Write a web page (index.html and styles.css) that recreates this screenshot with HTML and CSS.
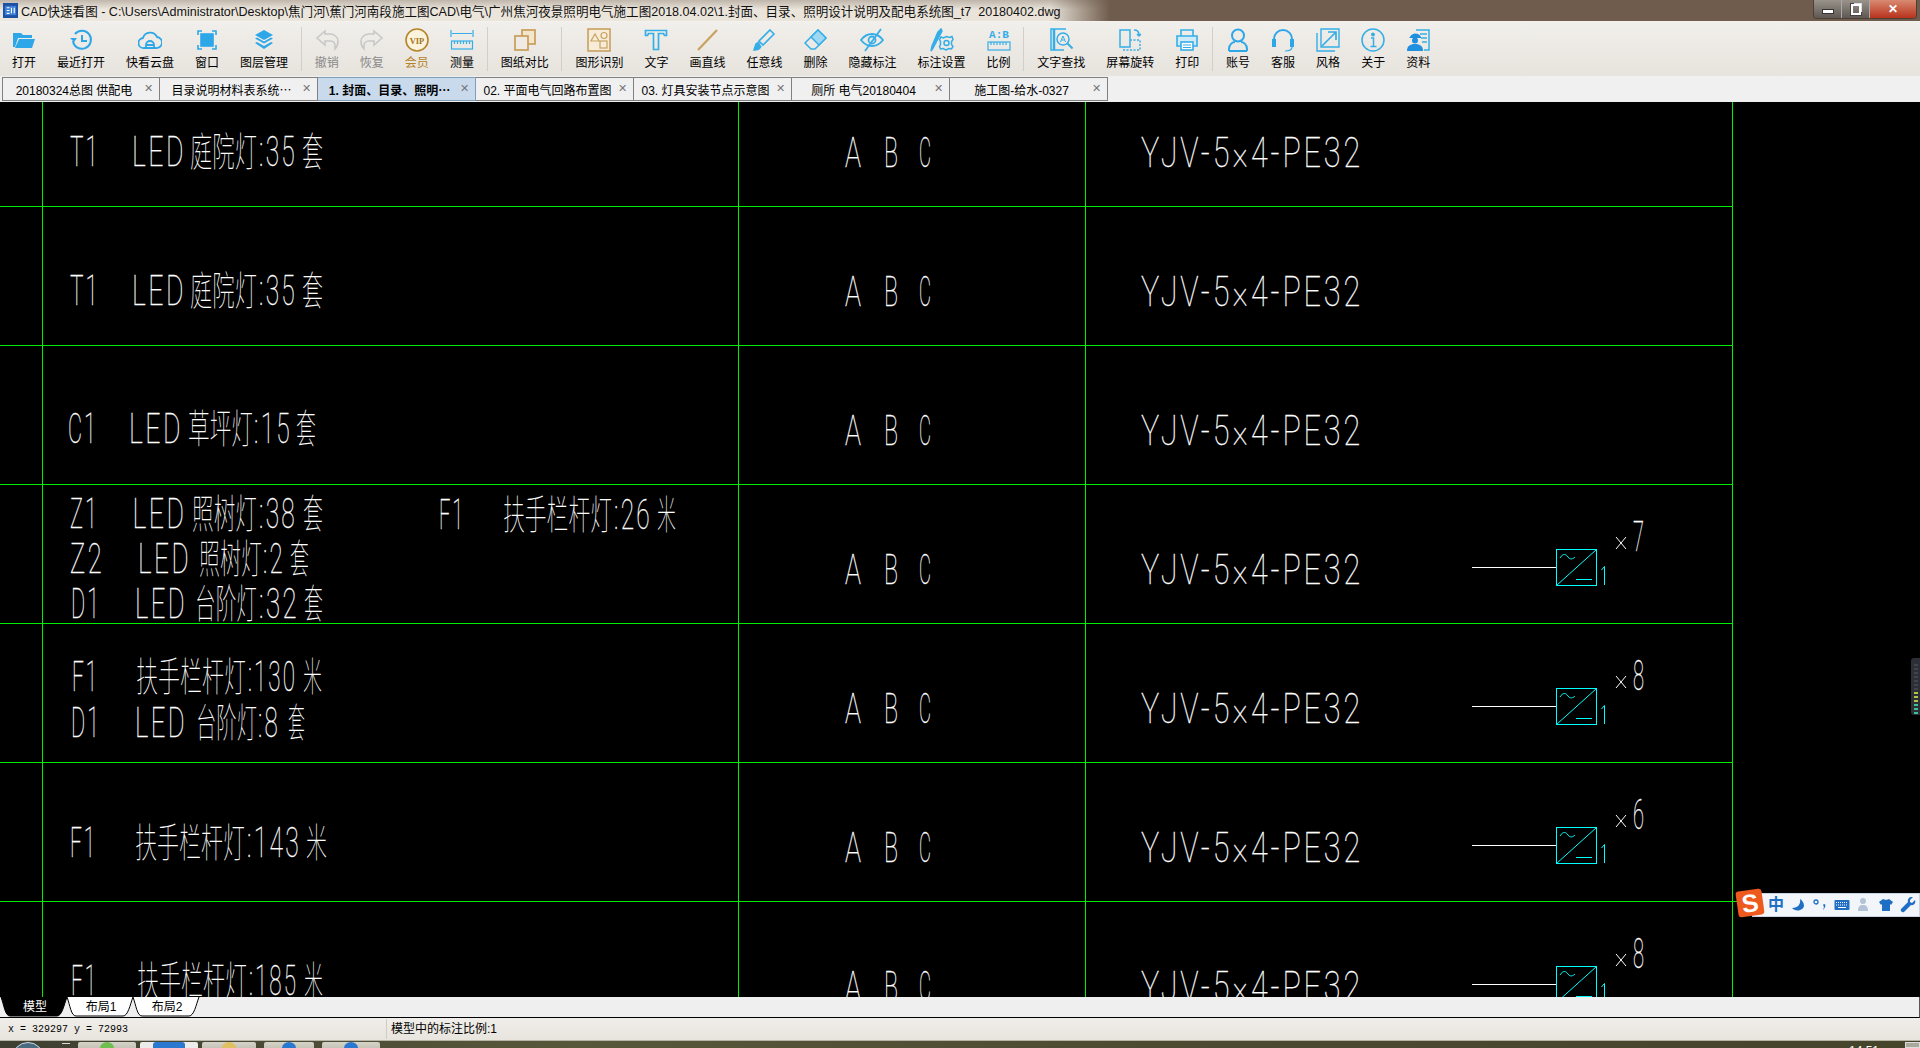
FILE: index.html
```html
<!DOCTYPE html>
<html lang="zh-CN">
<head>
    <meta charset="UTF-8">
    <title>CAD快速看图</title>
    <link rel="stylesheet" href="styles.css">
</head>
<body>
    <div class="titlebar">
        <svg class="app-icon" viewBox="0 0 16 16"><rect width="16" height="16" fill="#1d4fa3"/><rect x="2" y="3" width="12" height="10" fill="#3c7fd6"/><path d="M4 5h3M4 8h3M4 11h3M9 5v6M12 5v6" stroke="#fff" stroke-width="1.2"/></svg>
        <span class="title-text">CAD快速看图 - C:\Users\Administrator\Desktop\焦门河\蕉门河南段施工图CAD\电气\广州焦河夜景照明电气施工图2018.04.02\1.封面、目录、照明设计说明及配电系统图_t7&nbsp; 20180402.dwg</span>
        <div class="win-buttons">
            <div class="win-btn min"><i></i></div>
            <div class="win-btn restore"><i></i></div>
            <div class="win-btn close">✕</div>
        </div>
    </div>

    <div class="toolbar">
        <div class="tool">
            <svg viewBox="0 0 24 24" fill="#2ea7e8"><path d="M1 5h8l2 2h9v3H6L3 19H1z"/><path d="M7 11h16l-3 9H3z"/></svg>
            <span>打开</span>
        </div>
        <div class="tool">
            <svg viewBox="0 0 24 24" fill="none" stroke="#2ea7e8" stroke-width="2"><path d="M6 6a9 9 0 1 1-2 7"/><path d="M13 7v6h5"/><path d="M1 10h7L5 14z" fill="#2ea7e8" stroke="none"/></svg>
            <span>最近打开</span>
        </div>
        <div class="tool">
            <svg viewBox="0 0 24 24" fill="none" stroke="#2ea7e8" stroke-width="1.8"><path d="M6 20a5 5 0 0 1-1-10 7.5 7.5 0 0 1 14-1 5.5 5.5 0 0 1-1 11z"/><path d="M8 20v-3a4 4 0 0 1 8 0v3M8 17h8"/></svg>
            <span>快看云盘</span>
        </div>
        <div class="tool">
            <svg viewBox="0 0 24 24" fill="none" stroke="#2ea7e8" stroke-width="1.6"><path d="M3 7V3h4M17 3h4v4M21 17v4h-4M7 21H3v-4"/><rect x="6" y="6" width="12" height="12" fill="#2ea7e8"/></svg>
            <span>窗口</span>
        </div>
        <div class="tool">
            <svg viewBox="0 0 24 24" fill="#2ea7e8"><path d="M12 2l9 5-9 5-9-5z"/><path d="M3 10.500l2-1 7 4 7-4 2 1-9 5z"/><path d="M3 15l2-1 7 4 7-4 2 1-9 6z"/></svg>
            <span>图层管理</span>
        </div>
        <div class="tool-sep"></div>
        <div class="tool off">
            <svg viewBox="0 0 24 24" fill="none" stroke="#c8c8c8" stroke-width="1.6"><path d="M10 3L2 10l8 7v-4h5c3 0 5 2 5 5v3c2-2 3-5 3-8 0-4-4-7-8-7h-5z"/></svg>
            <span>撤销</span>
        </div>
        <div class="tool off">
            <svg viewBox="0 0 24 24" fill="none" stroke="#c8c8c8" stroke-width="1.6"><path d="M14 3l8 7-8 7v-4H9c-3 0-5 2-5 5v3c-2-2-3-5-3-8 0-4 4-7 8-7h5z"/></svg>
            <span>恢复</span>
        </div>
        <div class="tool vip">
            <svg viewBox="0 0 24 24"><circle cx="12" cy="12" r="11" fill="#fbf3dc" stroke="#b5832a" stroke-width="1.6"/><text x="12" y="15.500" class="vip-mark">VIP</text></svg>
            <span>会员</span>
        </div>
        <div class="tool">
            <svg viewBox="0 0 24 24" fill="none" stroke="#35aee8" stroke-width="1.2"><path d="M1 2v7M23 2v7M2 5.500h20"/><rect x="1.500" y="13" width="21" height="8"/><path d="M4.500 13v3M7.500 13v3M10.500 13v3M13.500 13v3M16.500 13v3M19.500 13v3"/></svg>
            <span>测量</span>
        </div>
        <div class="tool-sep"></div>
        <div class="tool">
            <svg viewBox="0 0 24 24" fill="none" stroke="#c9a260" stroke-width="1.8"><rect x="9" y="2" width="13" height="14" fill="#f3e6cc"/><rect x="2" y="8" width="13" height="14" fill="#efeae3"/></svg>
            <span>图纸对比</span>
        </div>
        <div class="tool-sep"></div>
        <div class="tool">
            <svg viewBox="0 0 24 24" fill="none" stroke="#c9a260" stroke-width="1.2"><rect x="1" y="1" width="22" height="22" fill="#f6ecd8" stroke-width="1.6"/><path d="M8 6l4 7H4z"/><circle cx="17" cy="7.500" r="3"/><rect x="13" y="13" width="7" height="7"/></svg>
            <span>图形识别</span>
        </div>
        <div class="tool">
            <svg viewBox="0 0 24 24" fill="none" stroke="#35aee8" stroke-width="1.7"><path d="M1.500 2.500h21v5h-2l-1-2h-5v16h-5v-16h-5l-1 2h-2z"/></svg>
            <span>文字</span>
        </div>
        <div class="tool">
            <svg viewBox="0 0 24 24" fill="none" stroke="#c9a260" stroke-width="2.2"><path d="M3 22L22 2"/></svg>
            <span>画直线</span>
        </div>
        <div class="tool">
            <svg viewBox="0 0 24 24" fill="none" stroke="#35aee8" stroke-width="1.6"><path d="M18 2l4 4-11 11-4-4z"/><path d="M7 14l-3 2-2 6c3 0 6-1 7-4" fill="#35aee8"/></svg>
            <span>任意线</span>
        </div>
        <div class="tool">
            <svg viewBox="0 0 24 24" fill="none" stroke="#35aee8" stroke-width="1.5"><path d="M15 2l8 8-11 11H8l-6-6z"/><path d="M15 2l8 8-7 7-8-8z" fill="#9fd8f3"/></svg>
            <span>删除</span>
        </div>
        <div class="tool">
            <svg viewBox="0 0 24 24" fill="none" stroke="#35aee8" stroke-width="1.8"><path d="M1 12c6-8 16-8 22 0-6 8-16 8-22 0z"/><circle cx="12" cy="12" r="3.500"/><path d="M5 23L21 1"/></svg>
            <span>隐藏标注</span>
        </div>
        <div class="tool">
            <svg viewBox="0 0 24 24" fill="none" stroke="#35aee8" stroke-width="1.5"><path d="M8 4l3-3 1 2-9 17-2 3 1-5z" fill="#35aee8"/><circle cx="16.500" cy="15" r="2.500"/><path d="M16.500 8.500l3 1 2.500-1 1 3-1.500 2v3l1.500 2-1.500 2.500-2.500-.5-3 1.500-3-1.500-2.500.5-1-2.500 1-2v-3l-1-2 1.500-2.500 2.500 1z"/></svg>
            <span>标注设置</span>
        </div>
        <div class="tool">
            <svg viewBox="0 0 24 24"><text x="12" y="10" class="ratio-mark">A:B</text><g fill="none" stroke="#35aee8" stroke-width="1.200"><rect x="1" y="14" width="22" height="8"/><path d="M4 14v3M7 14v3M10 14v3M13 14v3M16 14v3M19 14v3"/></g></svg>
            <span>比例</span>
        </div>
        <div class="tool-sep"></div>
        <div class="tool">
            <svg viewBox="0 0 24 24" fill="none" stroke="#35aee8" stroke-width="1.500"><path d="M17 1H2v21h13"/><path d="M5 1v21" stroke-width="2.500"/><circle cx="14" cy="11" r="6"/><path d="M18.500 15.500l5 5" stroke-width="2"/><path d="M11.500 14l2.500-6 2.500 6M12.500 12h3" stroke-width="1"/></svg>
            <span>文字查找</span>
        </div>
        <div class="tool">
            <svg viewBox="0 0 24 24" fill="none" stroke="#35aee8" stroke-width="1.500"><rect x="2" y="2" width="10" height="17"/><path d="M12 12h10v10H6v-3" stroke-dasharray="2 1.500"/><path d="M16 2c3 0 5 2 5 5M19 6l2 2 2-2"/></svg>
            <span>屏幕旋转</span>
        </div>
        <div class="tool">
            <svg viewBox="0 0 24 24" fill="none" stroke="#35aee8" stroke-width="1.600"><path d="M6 8V2h12v6"/><path d="M6 18H2V8h20v10h-4" fill="#cfeaf8"/><rect x="6" y="14" width="12" height="8" fill="#fff"/><path d="M8 17h8M8 19.500h8" stroke-width="1"/></svg>
            <span>打印</span>
        </div>
        <div class="tool-sep"></div>
        <div class="tool">
            <svg viewBox="0 0 24 24" fill="none" stroke="#2ea7e8" stroke-width="2"><circle cx="12" cy="7.500" r="6"/><path d="M3 23v-2c0-5 4-7 6-7M21 23v-2c0-5-4-7-6-7M3 23h18"/></svg>
            <span>账号</span>
        </div>
        <div class="tool">
            <svg viewBox="0 0 24 24" fill="none" stroke="#2ea7e8" stroke-width="2"><path d="M3 14v-3a9 9 0 0 1 18 0v3"/><path d="M1 11h4v8H1zM19 11h4v8h-4z" fill="#2ea7e8" stroke="none"/><path d="M21 19c0 3-3 4-7 4" stroke-width="1.200"/></svg>
            <span>客服</span>
        </div>
        <div class="tool">
            <svg viewBox="0 0 24 24" fill="none" stroke="#35aee8" stroke-width="1.700"><path d="M1 5v18h18M5 1h18v18H5z" stroke-width="1.400"/><path d="M6 18L20 4M12 4h8v8"/></svg>
            <span>风格</span>
        </div>
        <div class="tool">
            <svg viewBox="0 0 24 24" fill="none" stroke="#35aee8" stroke-width="1.500"><circle cx="12" cy="12" r="11"/><path d="M10 10h2.500v8M9.500 18.500h6" stroke-width="1.500"/><circle cx="12" cy="6.500" r="1.200" fill="#35aee8"/></svg>
            <span>关于</span>
        </div>
        <div class="tool">
            <svg viewBox="0 0 24 24"><g fill="none" stroke="#35aee8" stroke-width="1.500"><path d="M10 2h13v20h-5M14 6h7M15 10h6M16 14h5"/></g><path d="M4 9a6 6 0 0 1 11 0v1H3z" fill="#1f8fe0"/><circle cx="9" cy="12.500" r="3" fill="#1f8fe0"/><path d="M1 23c0-5 3-7 8-7s8 2 8 7z" fill="#1f8fe0"/></svg>
            <span>资料</span>
        </div>
    </div>

    <div class="doc-tabs">
        <div class="doc-tab"><span class="doc-name">20180324总图 供配电</span><b>✕</b></div>
        <div class="doc-tab"><span class="doc-name">目录说明材料表系统⋯</span><b>✕</b></div>
        <div class="doc-tab active"><span class="doc-name">1. 封面、目录、照明⋯</span><b>✕</b></div>
        <div class="doc-tab"><span class="doc-name">02. 平面电气回路布置图</span><b>✕</b></div>
        <div class="doc-tab"><span class="doc-name">03. 灯具安装节点示意图</span><b>✕</b></div>
        <div class="doc-tab"><span class="doc-name">厕所 电气20180404</span><b>✕</b></div>
        <div class="doc-tab"><span class="doc-name">施工图-给水-0327</span><b>✕</b></div>
    </div>

    <div class="canvas">
        <svg class="drawing" viewBox="0 102 1920 895" width="1920" height="895">
            <defs>
                <g id="driver">
                    <path class="wire" d="M1472 567.500H1556"/>
                    <rect class="cyan" x="1556.500" y="549.500" width="40" height="36"/>
                    <path class="cyan" d="M1556.500 585.500L1596.500 549.500M1576 579.500H1592M1560 558c3-5 6-4 8-1s5 2 7 0"/>
                    <path class="cyan" d="M1601.500 570L1604.500 566.500V585"/>
                </g>
                <path id="times" class="wire thin" d="M1616 537L1626 549M1626 537L1616 549"/>
            </defs>

            <path class="grid" d="M42.500 102V997M738.500 102V997M1085.500 102V997M1732.500 102V997"/>
            <path class="grid" d="M0 206.500H1733M0 345.500H1733M0 484.500H1733M0 623.500H1733M0 762.500H1733M0 901.500H1920"/>

            <!-- phase and cable columns, one row each -->
            <g id="cable-row">
                <text class="cad one" x="845" y="167" textLength="16" lengthAdjust="spacingAndGlyphs">A</text>
                <text class="cad one" x="884" y="167" textLength="14" lengthAdjust="spacingAndGlyphs">B</text>
                <text class="cad one" x="919" y="167" textLength="12" lengthAdjust="spacingAndGlyphs">C</text>
                <text class="cad" x="1141" y="167" textLength="222" lengthAdjust="spacingAndGlyphs">YJV-5×4-PE32</text>
            </g>
            <use href="#cable-row" y="139"/>
            <use href="#cable-row" y="278"/>
            <use href="#cable-row" y="417"/>
            <use href="#cable-row" y="556"/>
            <use href="#cable-row" y="695"/>
            <use href="#cable-row" y="834"/>

            <text class="cad" x="70" y="166" textLength="30" lengthAdjust="spacingAndGlyphs">T1</text>
            <text class="cad" x="132" y="166" textLength="54" lengthAdjust="spacingAndGlyphs">LED</text>
            <text class="han" x="190" y="166" textLength="67" lengthAdjust="spacingAndGlyphs">庭院灯</text>
            <text class="cad" x="259" y="166" textLength="38" lengthAdjust="spacingAndGlyphs">:35</text>
            <text class="han" x="302" y="166" textLength="21" lengthAdjust="spacingAndGlyphs">套</text>

            <text class="cad" x="70" y="305" textLength="30" lengthAdjust="spacingAndGlyphs">T1</text>
            <text class="cad" x="132" y="305" textLength="54" lengthAdjust="spacingAndGlyphs">LED</text>
            <text class="han" x="190" y="305" textLength="67" lengthAdjust="spacingAndGlyphs">庭院灯</text>
            <text class="cad" x="259" y="305" textLength="38" lengthAdjust="spacingAndGlyphs">:35</text>
            <text class="han" x="302" y="305" textLength="21" lengthAdjust="spacingAndGlyphs">套</text>

            <text class="cad" x="68" y="443" textLength="30" lengthAdjust="spacingAndGlyphs">C1</text>
            <text class="cad" x="129" y="443" textLength="54" lengthAdjust="spacingAndGlyphs">LED</text>
            <text class="han" x="188" y="443" textLength="65" lengthAdjust="spacingAndGlyphs">草坪灯</text>
            <text class="cad" x="254" y="443" textLength="38" lengthAdjust="spacingAndGlyphs">:15</text>
            <text class="han" x="296" y="443" textLength="20" lengthAdjust="spacingAndGlyphs">套</text>

            <text class="cad" x="70" y="528" textLength="29" lengthAdjust="spacingAndGlyphs">Z1</text>
            <text class="cad" x="132.500" y="528" textLength="54" lengthAdjust="spacingAndGlyphs">LED</text>
            <text class="han" x="192" y="528" textLength="65" lengthAdjust="spacingAndGlyphs">照树灯</text>
            <text class="cad" x="259" y="528" textLength="38" lengthAdjust="spacingAndGlyphs">:38</text>
            <text class="han" x="303" y="528" textLength="20" lengthAdjust="spacingAndGlyphs">套</text>

            <text class="cad" x="439" y="529" textLength="26" lengthAdjust="spacingAndGlyphs">F1</text>
            <text class="han" x="503" y="529" textLength="109" lengthAdjust="spacingAndGlyphs">扶手栏杆灯</text>
            <text class="cad" x="614" y="529" textLength="38" lengthAdjust="spacingAndGlyphs">:26</text>
            <text class="han" x="657" y="529" textLength="19" lengthAdjust="spacingAndGlyphs">米</text>

            <text class="cad" x="70" y="573" textLength="34" lengthAdjust="spacingAndGlyphs">Z2</text>
            <text class="cad" x="138" y="573" textLength="53" lengthAdjust="spacingAndGlyphs">LED</text>
            <text class="han" x="199" y="573" textLength="63" lengthAdjust="spacingAndGlyphs">照树灯</text>
            <text class="cad" x="263" y="573" textLength="22" lengthAdjust="spacingAndGlyphs">:2</text>
            <text class="han" x="290" y="573" textLength="19" lengthAdjust="spacingAndGlyphs">套</text>

            <text class="cad" x="71" y="618" textLength="30" lengthAdjust="spacingAndGlyphs">D1</text>
            <text class="cad" x="135" y="618" textLength="52" lengthAdjust="spacingAndGlyphs">LED</text>
            <text class="han" x="195" y="618" textLength="62" lengthAdjust="spacingAndGlyphs">台阶灯</text>
            <text class="cad" x="259" y="618" textLength="40" lengthAdjust="spacingAndGlyphs">:32</text>
            <text class="han" x="304" y="618" textLength="19" lengthAdjust="spacingAndGlyphs">套</text>

            <text class="cad" x="72" y="691" textLength="27" lengthAdjust="spacingAndGlyphs">F1</text>
            <text class="han" x="136" y="691" textLength="110" lengthAdjust="spacingAndGlyphs">扶手栏杆灯</text>
            <text class="cad" x="248" y="691" textLength="49" lengthAdjust="spacingAndGlyphs">:130</text>
            <text class="han" x="303" y="691" textLength="19" lengthAdjust="spacingAndGlyphs">米</text>

            <text class="cad" x="71" y="737" textLength="30" lengthAdjust="spacingAndGlyphs">D1</text>
            <text class="cad" x="135" y="737" textLength="52" lengthAdjust="spacingAndGlyphs">LED</text>
            <text class="han" x="196" y="737" textLength="61" lengthAdjust="spacingAndGlyphs">台阶灯</text>
            <text class="cad" x="258" y="737" textLength="22" lengthAdjust="spacingAndGlyphs">:8</text>
            <text class="han" x="288" y="737" textLength="17" lengthAdjust="spacingAndGlyphs">套</text>

            <text class="cad" x="70" y="857" textLength="27" lengthAdjust="spacingAndGlyphs">F1</text>
            <text class="han" x="135" y="857" textLength="110" lengthAdjust="spacingAndGlyphs">扶手栏杆灯</text>
            <text class="cad" x="247" y="857" textLength="54" lengthAdjust="spacingAndGlyphs">:143</text>
            <text class="han" x="306" y="857" textLength="21" lengthAdjust="spacingAndGlyphs">米</text>

            <text class="cad" x="71" y="995" textLength="27" lengthAdjust="spacingAndGlyphs">F1</text>
            <text class="han" x="137" y="995" textLength="110" lengthAdjust="spacingAndGlyphs">扶手栏杆灯</text>
            <text class="cad" x="249" y="995" textLength="49" lengthAdjust="spacingAndGlyphs">:185</text>
            <text class="han" x="304" y="995" textLength="19" lengthAdjust="spacingAndGlyphs">米</text>

            <use href="#driver"/>
            <use href="#driver" y="139"/>
            <use href="#driver" y="278"/>
            <use href="#driver" y="417"/>
            <use href="#times"/>
            <use href="#times" y="139"/>
            <use href="#times" y="278"/>
            <use href="#times" y="417"/>
            <text class="cad one" x="1633" y="551" textLength="11" lengthAdjust="spacingAndGlyphs">7</text>
            <text class="cad one" x="1633" y="690" textLength="11" lengthAdjust="spacingAndGlyphs">8</text>
            <text class="cad one" x="1633" y="829" textLength="11" lengthAdjust="spacingAndGlyphs">6</text>
            <text class="cad one" x="1633" y="968" textLength="11" lengthAdjust="spacingAndGlyphs">8</text>
        </svg>

        <div class="meter">
            <i></i><i></i><i></i><i></i><i></i><i></i><i></i>
            <i class="y"></i><i class="y"></i><i class="y"></i><i class="g"></i><i class="g"></i><i class="g"></i>
        </div>

        <div class="ime">
            <div class="ime-logo">S</div>
            <span class="ime-zh">中</span>
            <svg viewBox="0 0 16 16"><path d="M10 2c1 5-2 9-8 9 3 4 11 3 12-2 0-3-2-6-4-7z" fill="#1f6fc4"/></svg>
            <svg viewBox="0 0 16 16"><circle cx="4" cy="5" r="2" fill="none" stroke="#1f6fc4" stroke-width="1.300"/><path d="M12 7c2 0 2 3-1 6l1-3c-1-1-1-3 0-3z" fill="#1f6fc4"/></svg>
            <svg viewBox="0 0 16 16"><rect x="0.500" y="3" width="15" height="10" rx="1" fill="#1f6fc4"/><path d="M2 5.500h12M2 8h12" stroke="#fff" stroke-dasharray="1 1"/><path d="M4 10.500h8" stroke="#fff"/></svg>
            <svg viewBox="0 0 16 16" fill="#b3c2d6"><circle cx="7" cy="4" r="3"/><path d="M2 14c0-5 2-6 5-6s5 1 5 6z"/></svg>
            <svg viewBox="0 0 16 16"><path d="M5 2L1 5l2 3 1-1v7h8V7l1 1 2-3-4-3-3 1z" fill="#1f6fc4"/></svg>
            <svg viewBox="0 0 16 16"><path d="M15 3l-3 3-2-1 0-2 3-3c-3-1-6 2-5 5L1 12c-1 2 1 4 3 3l7-7c3 1 5-2 4-5z" fill="#1f6fc4"/></svg>
        </div>
    </div>

    <div class="layout-tabs">
        <div class="layout-tab current">
            <svg viewBox="0 0 68 20"><path d="M1 0c3 8 4 19 9 19h47c5 0 7-11 10-19z"/></svg>
            <span>模型</span>
        </div>
        <div class="layout-tab">
            <svg viewBox="0 0 68 20"><path d="M1 0c3 8 4 19 9 19h47c5 0 7-11 10-19"/></svg>
            <span>布局1</span>
        </div>
        <div class="layout-tab">
            <svg viewBox="0 0 68 20"><path d="M1 0c3 8 4 19 9 19h47c5 0 7-11 10-19"/></svg>
            <span>布局2</span>
        </div>
    </div>

    <div class="statusbar">
        <span class="coords">x = 329297 y = 72993</span>
        <span class="scale-note">模型中的标注比例:1</span>
    </div>

    <div class="taskbar">
        <div class="start-orb"></div>
        <div class="grip"></div>
        <div class="task w58"><i class="green"></i></div>
        <div class="task w58 lit"><i class="blue wide"></i></div>
        <div class="task w54"><i class="yellow"></i></div>
        <div class="task w50 gap"><i class="blue"></i></div>
        <div class="task w58 gap"><i class="blue"></i></div>
        <span class="clock">14:51</span>
        <div class="show-desktop"></div>
    </div>
</body>
</html>
```

FILE: styles.css
```css
body {
    margin: 0;
    width: 1920px;
    height: 1048px;
    overflow: hidden;
    display: flex;
    flex-direction: column;
    font-family: "Liberation Sans", "Noto Sans CJK SC", sans-serif;
    font-size: 12px;
    color: #000;
    background: #000;
}

/* Title bar */
.titlebar {
    height: 21px;
    flex: none;
    display: flex;
    align-items: center;
    padding-left: 3px;
    background:
        linear-gradient(to bottom, rgba(111, 92, 77, 0.35), rgba(111, 92, 77, 0) 45%),
        linear-gradient(to right, #ece7de 0, #e9e3d9 1050px, #6f5c4d 1110px, #6f5c4d 100%);
    border-bottom: 1px solid #f4f2ee;
    box-sizing: content-box;
}

.app-icon {
    width: 15px;
    height: 15px;
    flex: none;
}

.title-text {
    margin-left: 3px;
    font-size: 12.56px;
    white-space: nowrap;
    color: #111;
}

.win-buttons {
    display: flex;
    margin-left: auto;
    margin-right: 3px;
    height: 18px;
    align-self: flex-start;
    border: 1px solid #4a4038;
    border-top: none;
    border-radius: 0 0 4px 4px;
    overflow: hidden;
}

.win-btn {
    display: flex;
    align-items: center;
    justify-content: center;
    border-right: 1px solid #aaa;
    background: linear-gradient(to bottom, #9a938c, #5f5852);
    color: #fff;
}

.win-btn.min {
    width: 27px;
}

.win-btn.min i {
    width: 10px;
    height: 3px;
    margin-top: 5px;
    background: #fff;
    border: 1px solid #333;
}

.win-btn.restore {
    width: 27px;
}

.win-btn.restore i {
    width: 6px;
    height: 7px;
    border: 2px solid #fff;
    box-shadow: 2px -2px 0 -1px #ddd, 0 0 0 1px #444;
}

.win-btn.close {
    width: 46px;
    border-right: none;
    font-size: 12px;
    font-weight: bold;
    background: linear-gradient(to bottom, #d88a72, #b9321c);
}

/* Toolbar */
.toolbar {
    height: 54px;
    flex: none;
    display: flex;
    padding-left: 1.5px;
    background: linear-gradient(to bottom, #f1efeb, #e7e3dd);
}

.tool {
    display: flex;
    flex-direction: column;
    align-items: center;
    padding: 6px 10.5px 0;
}

.tool svg {
    width: 24px;
    height: 24px;
    display: block;
}

.tool span {
    margin-top: 4px;
    line-height: 14px;
    white-space: nowrap;
}

.tool.off span {
    color: #8a8a8a;
}

.tool.vip span {
    color: #b5832a;
}

.tool-sep {
    width: 1px;
    margin: 5px 2.5px 5px 2.25px;
    background: #d2cfca;
}

.vip-mark {
    font-family: "Liberation Serif", serif;
    font-size: 8.5px;
    font-weight: bold;
    text-anchor: middle;
    fill: #a8741c;
}

.ratio-mark {
    font-family: "Liberation Mono", monospace;
    font-size: 11px;
    font-weight: bold;
    text-anchor: middle;
    fill: #35aee8;
}

/* Document tabs */
.doc-tabs {
    height: 26px;
    flex: none;
    display: flex;
    padding: 1px 0 0 2px;
    box-sizing: border-box;
    background: #f0f0f0;
}

.doc-tab {
    width: 158px;
    height: 24px;
    flex: none;
    position: relative;
    box-sizing: border-box;
    border: 1px solid #808080;
    border-left-width: 1px;
    display: flex;
    align-items: center;
    background: #f0f0f0;
}

.doc-tab + .doc-tab {
    border-left: none;
}

.doc-tab.active {
    background: #c9daec;
    border-color: #7f9db9;
    font-weight: bold;
}

.doc-name {
    flex: 1;
    text-align: center;
    padding-right: 14px;
    white-space: nowrap;
    overflow: hidden;
    font-size: 12px;
}

.doc-tab b {
    position: absolute;
    right: 6px;
    top: 4px;
    font-weight: normal;
    font-size: 11px;
    color: #777;
}

/* Drawing area */
.canvas {
    height: 895px;
    flex: none;
    position: relative;
    overflow: hidden;
    background: #000;
}

.drawing {
    display: block;
}

.grid {
    fill: none;
    stroke: #00ee00;
    stroke-width: 1;
    shape-rendering: crispEdges;
}

.cad {
    font-family: "Roboto", "Liberation Sans", sans-serif;
    font-weight: 100;
    font-size: 43px;
    letter-spacing: 4px;
    fill: #fff;
    stroke: #fff;
    stroke-width: 0.3px;
}

.cad.one {
    letter-spacing: 0;
}

.han {
    font-family: "Noto Sans CJK SC", sans-serif;
    font-weight: 100;
    font-size: 40px;
    fill: #fff;
}

.wire {
    fill: none;
    stroke: #fff;
    stroke-width: 1;
}

.cyan {
    fill: none;
    stroke: #00ffff;
    stroke-width: 1;
}

.meter {
    position: absolute;
    right: 0;
    top: 556px;
    width: 9px;
    height: 57px;
    box-sizing: border-box;
    padding: 6px 2px 0 3px;
    display: flex;
    flex-direction: column;
    gap: 2px;
    background: #2c2f36;
    border-radius: 3px 0 0 3px;
}

.meter i {
    height: 2px;
    background: #40444c;
}

.meter i.y {
    background: #b5c24a;
}

.meter i.g {
    background: #3fbf9a;
}

.ime {
    position: absolute;
    right: 0;
    top: 791px;
    width: 168px;
    height: 24px;
    display: flex;
    align-items: center;
    gap: 6px;
    padding-left: 15px;
    box-sizing: border-box;
    background: #f2f6fb;
    border: 1px solid #c8d4e4;
}

.ime svg {
    width: 16px;
    height: 16px;
    flex: none;
}

.ime-logo {
    position: absolute;
    left: -16px;
    top: -4px;
    width: 26px;
    height: 26px;
    border-radius: 3px;
    transform: rotate(-8deg);
    background: #ee5a1e;
    color: #fff;
    font-weight: bold;
    font-size: 25px;
    line-height: 26px;
    text-align: center;
}

.ime-zh {
    width: 16px;
    font-size: 16px;
    font-weight: bold;
    line-height: 16px;
    color: #1f6fc4;
}

/* Layout tabs */
.layout-tabs {
    height: 20px;
    flex: none;
    display: flex;
    background: #efefef;
    border-bottom: 1px solid #000;
    border-right: 1px solid #555;
}

.layout-tab {
    width: 66px;
    position: relative;
    text-align: center;
    line-height: 20px;
}

.layout-tab svg {
    position: absolute;
    left: 0;
    top: 0;
    width: 68px;
    height: 20px;
}

.layout-tab svg path {
    fill: #fff;
    stroke: #000;
    stroke-width: 1;
}

.layout-tab.current svg path {
    fill: #000;
}

.layout-tab span {
    position: relative;
    left: 2px;
}

.layout-tab.current span {
    color: #fff;
}

/* Status bar */
.statusbar {
    height: 22px;
    flex: none;
    display: flex;
    align-items: center;
    background: linear-gradient(to bottom, #f0eeea, #e8e4de);
}

.coords {
    width: 378px;
    padding-left: 8px;
    font-family: "Liberation Mono", monospace;
    font-size: 10px;
    white-space: nowrap;
}

.scale-note {
    padding-left: 4px;
    border-left: 1px solid #cfcbc5;
    line-height: 20px;
}

/* Windows taskbar, cut off by the screen edge */
.taskbar {
    flex: 1;
    display: flex;
    overflow: hidden;
    padding-top: 1px;
    position: relative;
    border-top: 1px solid #b8b4a8;
    background: linear-gradient(to right, #3e3f30, #57583a 30%, #4d4a32 60%, #45452c);
}

.start-orb {
    width: 30px;
    height: 30px;
    margin-left: 12px;
    border-radius: 50%;
    border: 1px solid #c8d8e8;
    background: #4a6a80;
    flex: none;
}

.grip {
    width: 8px;
    height: 1px;
    margin: 1px 8px 0 18px;
    background: #ddd;
    flex: none;
}

.task {
    height: 12px;
    margin-right: 4px;
    display: flex;
    justify-content: center;
    flex: none;
    background: linear-gradient(to bottom, #d6d4c8, #b5b3a5);
    border-radius: 2px 2px 0 0;
}

.task.lit {
    background: #ececea;
}

.task.gap {
    margin-left: 4px;
}

.w58 {
    width: 58px;
}

.w54 {
    width: 54px;
}

.w50 {
    width: 50px;
}

.task i {
    width: 14px;
    height: 12px;
    border-radius: 50%;
}

.task i.wide {
    width: 32px;
    border-radius: 3px;
}

.green {
    background: #6fbf50;
}

.blue {
    background: #2a78d0;
}

.yellow {
    background: #e0c060;
}

.clock {
    margin-left: auto;
    margin-right: 26px;
    margin-top: 3px;
    color: #fff;
    font-size: 12px;
    line-height: 12px;
}

.show-desktop {
    width: 13px;
    flex: none;
    background: #a8a89c;
    border: 1px solid #ddd;
}
```
